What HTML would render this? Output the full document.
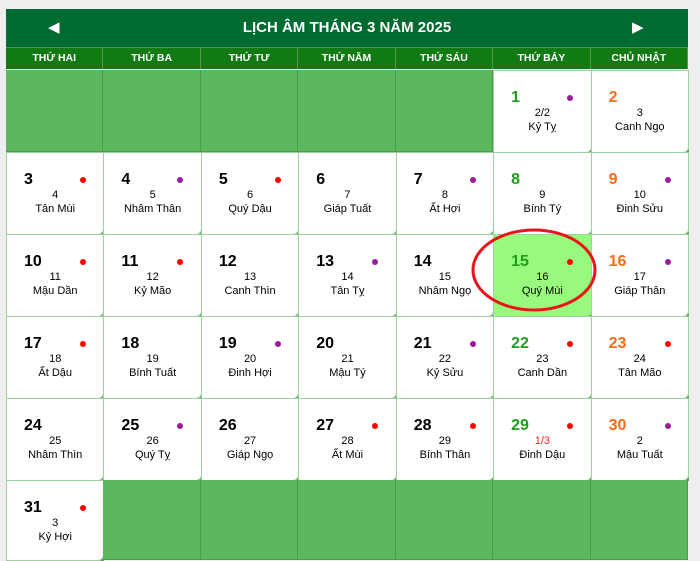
<!DOCTYPE html>
<html><head><meta charset="utf-8"><style>
body{margin:0;width:700px;height:559px;background:#eeeeee;overflow:hidden;position:relative;font-family:"Liberation Sans",sans-serif}
.hdr{position:absolute;left:6px;top:9px;width:682px;height:38px;background:#006b31;color:#fff;border-bottom:1px solid #5a8a5a}
.hdr .t{position:absolute;left:0;right:0;top:0;line-height:38px;text-align:center;font-weight:bold;font-size:15px}
.hdr .a{position:absolute;top:0;line-height:38px;font-size:15px}
.wk{position:absolute;top:48px;height:21px;background:#117a12;color:#fff;font-weight:bold;font-size:10.5px;line-height:21px;text-align:center;border-right:1px solid #4f9a4f;box-sizing:border-box}
.c{position:absolute;box-sizing:border-box;background:#fff;border:1px solid #9fd09f;border-bottom-right-radius:6px}
.c::after{content:"";position:absolute;right:-1px;bottom:-1px;width:0;height:0;border-left:4px solid transparent;border-bottom:4px solid #4caf50}
.e{position:absolute;box-sizing:border-box;background:#5cb85c;border-right:1px solid #45a045;border-bottom:1px solid #45a045}
.n{position:absolute;left:17px;top:18px;font-weight:bold;font-size:16px;color:#000}
.g{color:#1e9e1e}.o{color:#ff6a13}
.d{position:absolute;left:73px;top:24px;width:6px;height:6px;border-radius:50%}
.r{background:#f00}.p{background:#9b1b9b}
.l{position:absolute;left:0;right:0;top:35px;text-align:center;font-family:"Liberation Sans",sans-serif;font-size:11px;line-height:14px;color:#000}
.hl{background:#98fa7c}
</style></head><body>
<div class="hdr"><span class="a" style="left:42px">◀</span><div class="t">LỊCH ÂM THÁNG 3 NĂM 2025</div><span class="a" style="left:626px">▶</span></div>
<div id="g"></div>
<svg style="position:absolute;left:0;top:0" width="700" height="559"><ellipse cx="534" cy="270" rx="61" ry="40" fill="none" stroke="#e8141b" stroke-width="3"/></svg>
<script>
var W=97.43,L=6,T=[70,152,234,316,398,480,560];
var names=["THỨ HAI","THỨ BA","THỨ TƯ","THỨ NĂM","THỨ SÁU","THỨ BẢY","CHỦ NHẬT"];
var h="";
for(var i=0;i<7;i++){h+='<div class="wk" style="left:'+(L+i*W)+'px;width:'+W+'px">'+names[i]+'</div>';}
var data=[
[5,1,"p","2/2","Kỷ Tỵ"],[6,2,"","3","Canh Ngọ"],
[0,3,"r","4","Tân Mùi"],[1,4,"p","5","Nhâm Thân"],[2,5,"r","6","Quý Dậu"],[3,6,"","7","Giáp Tuất"],[4,7,"p","8","Ất Hợi"],[5,8,"","9","Bính Tý"],[6,9,"p","10","Đinh Sửu"],
[0,10,"r","11","Mậu Dần"],[1,11,"r","12","Kỷ Mão"],[2,12,"","13","Canh Thìn"],[3,13,"p","14","Tân Tỵ"],[4,14,"","15","Nhâm Ngọ"],[5,15,"r","16","Quý Mùi"],[6,16,"p","17","Giáp Thân"],
[0,17,"r","18","Ất Dậu"],[1,18,"","19","Bính Tuất"],[2,19,"p","20","Đinh Hợi"],[3,20,"","21","Mậu Tý"],[4,21,"p","22","Kỷ Sửu"],[5,22,"r","23","Canh Dần"],[6,23,"r","24","Tân Mão"],
[0,24,"","25","Nhâm Thìn"],[1,25,"p","26","Quý Tỵ"],[2,26,"","27","Giáp Ngọ"],[3,27,"r","28","Ất Mùi"],[4,28,"r","29","Bính Thân"],[5,29,"r","1/3","Đinh Dậu"],[6,30,"p","2","Mậu Tuất"],
[0,31,"r","3","Kỷ Hợi"]];
var filled={};
data.forEach(function(d){
 var col=d[0],day=d[1];
 var r=Math.floor((day+4)/7);
 filled[r+"_"+col]=1;
 var cls=col==5?" g":col==6?" o":"";
 var bg=day==15?" hl":"";
 h+='<div class="c'+bg+'" style="left:'+(L+col*W)+'px;top:'+T[r]+'px;width:'+(W+1)+'px;height:'+(T[r+1]-T[r]+1)+'px">'+
 '<span class="n'+cls+'">'+day+'</span>'+(d[2]?'<span class="d '+d[2]+'"></span>':'')+
 '<div class="l"><span'+(d[3]=="1/3"?' style="color:#f22"':'')+'>'+d[3]+'</span><br>'+d[4]+'</div></div>';
});
for(var r=0;r<6;r++)for(var c=0;c<7;c++){if(!filled[r+"_"+c]){h+='<div class="e" style="left:'+(L+c*W)+'px;top:'+T[r]+'px;width:'+W+'px;height:'+(T[r+1]-T[r])+'px"></div>';}}
document.getElementById("g").innerHTML=h;
</script>
</body></html>
